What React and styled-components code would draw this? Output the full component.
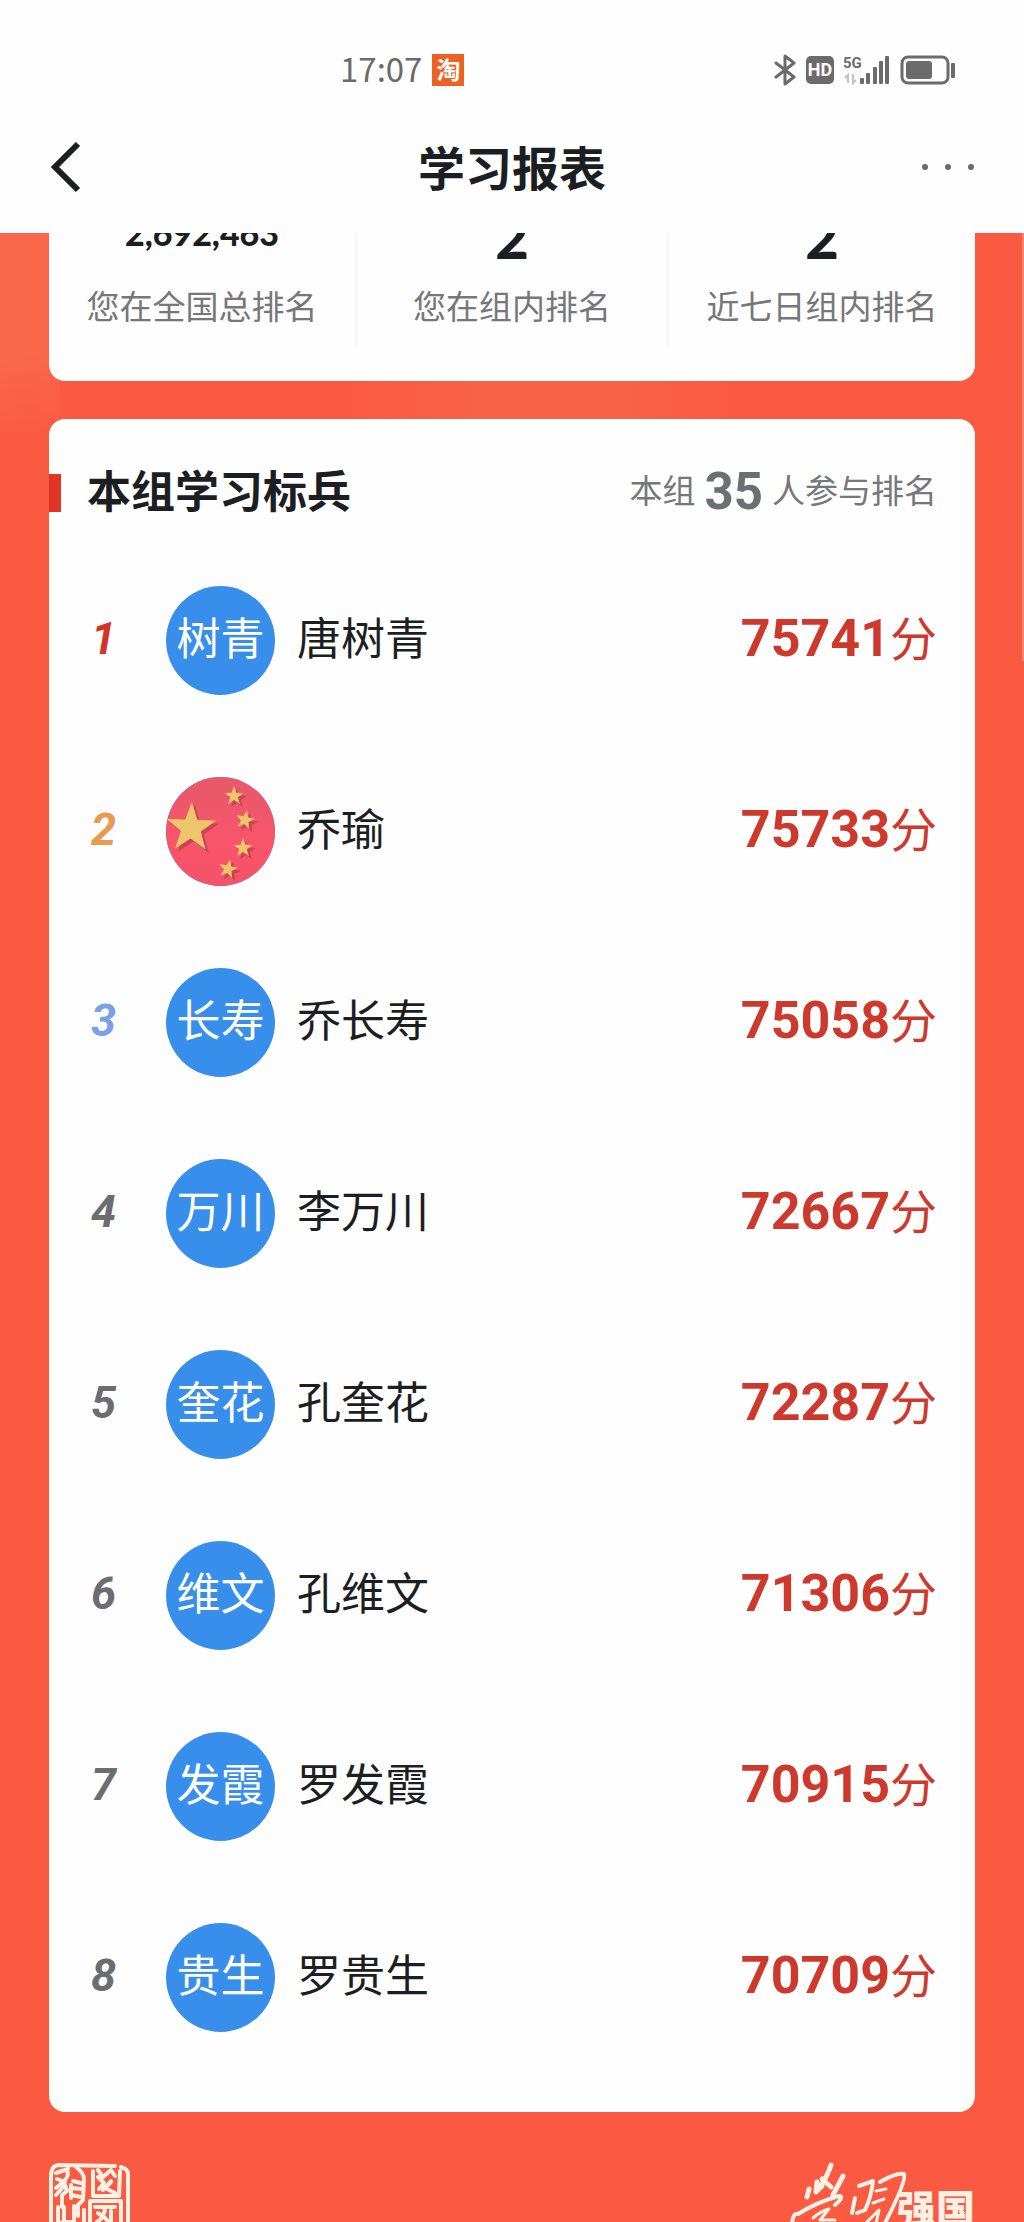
import React from "react";
import styled, { createGlobalStyle } from "styled-components";

const cjk = '"Noto Sans CJK SC", sans-serif';

const GlobalStyle = createGlobalStyle`
  *, *::before, *::after { box-sizing: border-box; }
  body { margin: 0; background: #fb5a41; font-family: ${cjk}; color: #1c1f22; }
  h1, h2, p, ol, dl, dd, dt { margin: 0; padding: 0; font-weight: inherit; }
`;

const Page = styled.div`
  min-height: 100vh;
  display: flex;
  flex-direction: column;
  background:
    linear-gradient(#fb8470, #fb8470) 100% 233px / 2px 428px no-repeat,
    linear-gradient(168deg, #f9684a 60%, transparent 98%) 0 233px / 60px 200px no-repeat,
    linear-gradient(90deg, transparent 34%, #f86445 48%, #f86445 60%, transparent 71%) 0 381px / 100% 38px no-repeat,
    #fa5a42;
`;

const Top = styled.header`
  background: #fefefe;
`;

const StatusBar = styled.div`
  display: flex;
  justify-content: space-between;
  align-items: center;
  height: 100px;
  padding: 40px 68px 0 340px;
  color: #6b6b6b;
`;

const StatusGroup = styled.div`
  display: flex;
  align-items: center;
  gap: 10px;
`;

const Clock = styled.time`
  font: 400 33px/36px ${cjk};
  padding-bottom: 4px;
`;

const TaoBadge = styled.span`
  width: 32px;
  height: 32px;
  background: #ec6224;
  color: #fff;
  font: 700 24px/30px ${cjk};
  text-align: center;
`;

const HdBadge = styled.span`
  width: 28px;
  height: 28px;
  border-radius: 5px;
  background: #6b6b6b;
  color: #fff;
  font: 700 18px/28px Roboto, sans-serif;
  text-align: center;
`;

const NavBar = styled.nav`
  display: grid;
  grid-template-columns: 1fr auto 1fr;
  align-items: center;
  height: 133px;
  padding: 0 48px;
`;

const Title = styled.h1`
  font: 700 47px/64px ${cjk};
  padding-bottom: 2px;
`;

const IconButton = styled.button`
  display: flex;
  padding: 0;
  border: 0;
  background: none;
  color: inherit;
  cursor: pointer;
  justify-self: ${(p) => p.$side};
`;

const Content = styled.main`
  display: flex;
  flex-direction: column;
  gap: 38px;
  padding: 0 49px;
`;

const Card = styled.section`
  background: #fefefe;
  border-radius: ${(p) => (p.$cut ? "0 0 16px 16px" : "16px")};
  overflow: hidden;
`;

const Stats = styled.dl`
  display: grid;
  grid-template-columns: 309fr 311fr 306fr;
  height: 148px;
  padding-bottom: 36px;
`;

const Stat = styled.div`
  display: flex;
  flex-direction: column-reverse;
  justify-content: flex-end;
  align-items: center;
  overflow: hidden;
  border-right: ${(p) => (p.$last ? "0" : "3px solid #f6f6f6")};
`;

const StatValue = styled.dd`
  height: ${(p) => (p.$large ? "68px" : "72px")};
  margin-top: ${(p) => (p.$large ? "-20px" : "-24px")};
  font: 900 ${(p) => (p.$large ? "58px" : "34px")}/48px Lato, sans-serif;
`;

const StatLabel = styled.dt`
  font: 400 33px/48px ${cjk};
  color: #767779;
`;

const CardHead = styled.div`
  display: flex;
  align-items: center;
  justify-content: space-between;
  height: 102px;
  padding: 38px 38px 0 0;
`;

const Heading = styled.h2`
  display: flex;
  align-items: center;
  gap: 26px;
  font: 700 44px/64px ${cjk};

  &::before {
    content: "";
    width: 12px;
    height: 38px;
    margin-top: 8px;
    background: #de3525;
  }
`;

const Count = styled.p`
  display: flex;
  align-items: center;
  gap: 9px;
  font: 400 33px/64px ${cjk};
  color: #767779;

  strong {
    padding-top: 6px;
    font: 700 51px/64px Roboto, sans-serif;
    color: #6b7073;
  }
`;

const Ranking = styled.ol`
  display: flex;
  flex-direction: column;
  gap: 82px;
  padding: 65px 38px 80px;
  list-style: none;
`;

const Row = styled.li`
  display: grid;
  grid-template-columns: 79px 109px 1fr auto;
  align-items: center;
  height: 109px;
`;

const rankColors = { 1: "#d33427", 2: "#e99a50", 3: "#7d9fe6" };

const Rank = styled.span`
  padding: 0 0 4px 4px;
  font: italic 700 45px/64px Roboto, sans-serif;
  color: ${(p) => rankColors[p.$rank] || "#6b6d70"};
`;

const Avatar = styled.span`
  display: flex;
  justify-content: center;
  width: 109px;
  height: 109px;
  border-radius: 50%;
  overflow: hidden;
  background: #378eeb;
  color: #fff;
  font: 400 44px/100px ${cjk};
`;

const Name = styled.span`
  padding: 0 0 10px 22px;
  font: 400 44px/64px ${cjk};
`;

const Score = styled.span`
  display: flex;
  align-items: baseline;
  padding-bottom: 6px;
  font: 400 47px/64px ${cjk};
  color: #cd3a2d;

  strong {
    font: 700 52px/64px Roboto, sans-serif;
  }
`;

const Footer = styled.footer`
  display: flex;
  justify-content: space-between;
  height: 110px;
  padding: 50px 49px 0;
  overflow: hidden;
  color: #fff0e4;
`;

const Brand = styled.div`
  display: flex;
  align-items: flex-start;

  svg { overflow: visible; }
`;

const BrandName = styled.span`
  margin-top: 16px;
  font: 900 39px/56px ${cjk};
`;

const people = [
  { short: "树青", name: "唐树青", score: 75741 },
  { flag: true, name: "乔瑜", score: 75733 },
  { short: "长寿", name: "乔长寿", score: 75058 },
  { short: "万川", name: "李万川", score: 72667 },
  { short: "奎花", name: "孔奎花", score: 72287 },
  { short: "维文", name: "孔维文", score: 71306 },
  { short: "发霞", name: "罗发霞", score: 70915 },
  { short: "贵生", name: "罗贵生", score: 70709 },
];

const stats = [
  { label: "您在全国总排名", value: "2,692,463" },
  { label: "您在组内排名", value: "2", large: true },
  { label: "近七日组内排名", value: "2", large: true },
];

function starPoints(cx, cy, r, turn = 0) {
  return Array.from({ length: 10 }, (_, i) => {
    const a = ((i * 36 - 90 + turn) * Math.PI) / 180;
    const d = i % 2 ? r * 0.4 : r;
    return `${(cx + d * Math.cos(a)).toFixed(1)},${(cy + d * Math.sin(a)).toFixed(1)}`;
  }).join(" ");
}

const flagStars = [
  [25, 51, 26, 2],
  [68, 19, 10, 0],
  [79, 43, 10, 12],
  [77, 71, 10, 0],
  [62, 92, 10, 12],
];

const FlagPicture = () => (
  <svg width="109" height="109" viewBox="0 0 109 109" aria-hidden="true">
    <defs>
      <linearGradient id="flag" x1="0" y1="0" x2="0" y2="1">
        <stop offset="0" stopColor="#e65a6a" />
        <stop offset=".6" stopColor="#f8546a" />
        <stop offset="1" stopColor="#f4536a" />
      </linearGradient>
    </defs>
    <rect width="109" height="109" fill="url(#flag)" />
    {flagStars.map(([x, y, r, t]) => (
      <g key={y}>
        <polygon points={starPoints(x + 3, y + 3, r, t)} fill="#cf4153" />
        <polygon points={starPoints(x, y, r, t)} fill="#edc66c" />
      </g>
    ))}
  </svg>
);

const Bluetooth = () => (
  <svg width="22" height="32" viewBox="0 0 22 32" fill="none" stroke="#6b6b6b" strokeWidth="3" strokeLinejoin="round" strokeLinecap="round" aria-label="蓝牙">
    <path d="M2 9 20 23 11 30V2L20 9 2 23" />
  </svg>
);

const Signal = () => (
  <svg width="46" height="30" viewBox="0 0 46 30" aria-label="5G">
    <text x="-1" y="13" fontFamily="Roboto, sans-serif" fontWeight="700" fontSize="15" fill="#6b6b6b">5G</text>
    <path d="M1 23 4 20V28M9 19V28L12 25" fill="none" stroke="#c4c4c4" strokeWidth="2" />
    <g fill="#6b6b6b">
      <rect x="16" y="23" width="4" height="6" rx="1" />
      <rect x="22" y="18" width="4" height="11" rx="1" />
      <rect x="29" y="12" width="4" height="17" rx="1" />
      <rect x="35" y="6" width="4" height="23" rx="1" />
      <rect x="41" y="1" width="4" height="28" rx="1" />
    </g>
  </svg>
);

const Battery = () => (
  <svg width="56" height="30" viewBox="0 0 56 30" aria-label="电量">
    <rect x="2" y="2" width="46" height="26" rx="6" fill="none" stroke="#6b6b6b" strokeWidth="3" />
    <rect x="6" y="6" width="26" height="18" rx="3" fill="#6b6b6b" />
    <rect x="51" y="8" width="4" height="15" rx="1" fill="#6b6b6b" />
  </svg>
);

const Seal = () => (
  <svg width="82" height="82" viewBox="0 0 82 82" fill="none" stroke="currentColor" strokeWidth="4" strokeLinecap="round" strokeLinejoin="round" aria-hidden="true">
    <path d="M2 82V14Q2 4 9 3L66 4M72 5Q79 7 79 12V82" />
    <path d="M7 11 19 7M18 8Q21 14 14 20L7 26M8 17 16 20M7 33 16 23M16 23 18 29 13 33V45" />
    <path d="M27 5Q35 11 35 17L34 38 29 43V54M24 19 32 21M23 26 32 27M22 33 32 35M22 23V36" />
    <path d="M9 45V62Q12 60 15 60V45M15 60H25V44M35 48V60M7 62H34M22 60V82M9 68V82" />
    <path d="M44 9V34M44 34H70M71 9 70 34M49 8 54 15 62 8 66 14M49 15 55 21 50 27M62 19 56 26 66 31M54 28 62 20" />
    <path d="M41 82V39H72V82M46 45H66M56 45Q56 55 48 60M49 51 56 56 65 66M62 49V60" />
  </svg>
);

const Calligraphy = () => (
  <svg width="108" height="64" viewBox="0 0 108 64" fill="none" stroke="currentColor" strokeLinecap="round" strokeLinejoin="round" aria-label="学习">
    <g strokeWidth="5">
      <path d="M20 27 18 35M28 20 27 30 33 24M42 3Q38 15 31 25M33 17 42 25M54 14 44 33" />
      <path d="M3 62Q4 50 9 52Q28 40 50 34Q56 34 46 43" strokeWidth="4" />
      <path d="M24 56Q32 49 40 47L31 58H46" strokeWidth="3" />
      <path d="M70 24 84 19Q82 36 76 48L68 51M66 36 63 51" strokeWidth="4" />
      <path d="M91 20Q108 10 115 12Q118 18 96 61" strokeWidth="4" />
      <path d="M87 29 97 27M84 41 95 37M76 62 90 48 87 62" strokeWidth="3" />
    </g>
  </svg>
);

export default function App() {
  return (
    <>
      <GlobalStyle />
      <Page>
        <Top>
          <StatusBar>
            <StatusGroup>
              <Clock>17:07</Clock>
              <TaoBadge>淘</TaoBadge>
            </StatusGroup>
            <StatusGroup>
              <Bluetooth />
              <HdBadge>HD</HdBadge>
              <Signal />
              <Battery />
            </StatusGroup>
          </StatusBar>
          <NavBar>
            <IconButton type="button" $side="start" aria-label="返回">
              <svg width="34" height="52" viewBox="0 0 34 52" fill="none" stroke="currentColor" strokeWidth="6">
                <path d="M30 3 7 26 30 49" />
              </svg>
            </IconButton>
            <Title>学习报表</Title>
            <IconButton type="button" $side="end" aria-label="更多">
              <svg width="56" height="8" viewBox="0 0 56 8" fill="#6b6b6b">
                <circle cx="5" cy="4" r="3" />
                <circle cx="28" cy="4" r="3" />
                <circle cx="51" cy="4" r="3" />
              </svg>
            </IconButton>
          </NavBar>
        </Top>

        <Content>
          <Card $cut>
            <Stats>
              {stats.map((s, i) => (
                <Stat key={s.label} $last={i === stats.length - 1}>
                  <StatLabel>{s.label}</StatLabel>
                  <StatValue $large={s.large}>{s.value}</StatValue>
                </Stat>
              ))}
            </Stats>
          </Card>

          <Card>
            <CardHead>
              <Heading>本组学习标兵</Heading>
              <Count>
                本组<strong>35</strong>人参与排名
              </Count>
            </CardHead>
            <Ranking>
              {people.map((p, i) => (
                <Row key={p.name}>
                  <Rank $rank={i + 1}>{i + 1}</Rank>
                  <Avatar>{p.flag ? <FlagPicture /> : p.short}</Avatar>
                  <Name>{p.name}</Name>
                  <Score>
                    <strong>{p.score}</strong>分
                  </Score>
                </Row>
              ))}
            </Ranking>
          </Card>
        </Content>

        <Footer>
          <Seal />
          <Brand>
            <Calligraphy />
            <BrandName>强国</BrandName>
          </Brand>
        </Footer>
      </Page>
    </>
  );
}
